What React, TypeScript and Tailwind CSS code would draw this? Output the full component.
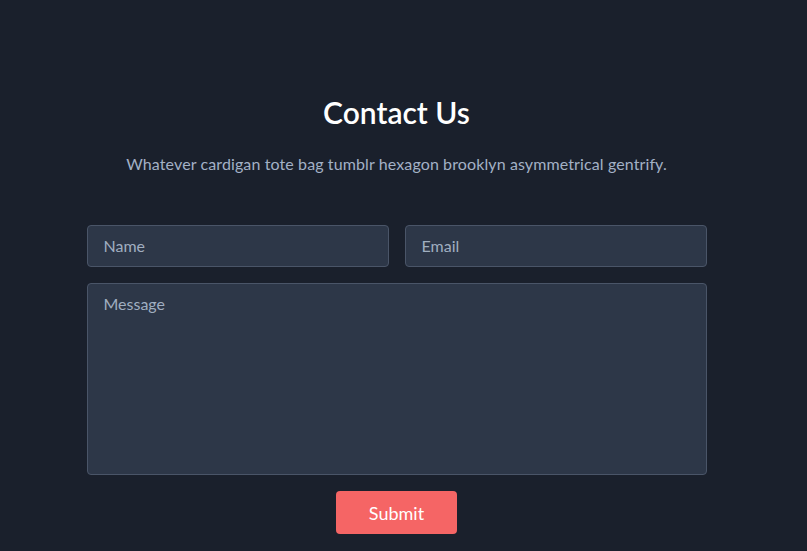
export default function App() {
  return (
    <div className="h-screen overflow-hidden bg-[#1a202c]" style={{ fontFamily: "Lato, 'Open Sans', sans-serif" }}>
      <section className="w-[793px] pt-[94px] flex flex-col items-center">
        <h1 className="text-[30px] leading-9 font-semibold text-white">Contact Us</h1>
        <p className="mt-[21px] text-base leading-[26px] tracking-[0.11px] text-[#a3b1c6]">
          Whatever cardigan tote bag tumblr hexagon brooklyn asymmetrical gentrify.
        </p>
        <form className="mt-12 w-[620px] flex flex-col gap-4" onSubmit={(e) => e.preventDefault()}>
          <div className="flex gap-4">
            <input
              type="text"
              placeholder="Name"
              className="flex-1 min-w-0 h-[42px] px-4 pb-px rounded bg-[#2d3748] border border-[#4a5568] text-base text-white placeholder:text-[#a0aec0] outline-none"
            />
            <input
              type="email"
              placeholder="Email"
              className="flex-1 min-w-0 h-[42px] px-4 pb-px rounded bg-[#2d3748] border border-[#4a5568] text-base text-white placeholder:text-[#a0aec0] outline-none"
            />
          </div>
          <textarea
            placeholder="Message"
            className="h-48 px-4 py-2 leading-6 resize-none rounded bg-[#2d3748] border border-[#4a5568] text-base text-white placeholder:text-[#a0aec0] outline-none"
          />
          <div className="flex justify-center">
            <button className="w-[121px] h-[43px] rounded bg-[#f56565] text-white text-lg">Submit</button>
          </div>
        </form>
      </section>
    </div>
  )
}
